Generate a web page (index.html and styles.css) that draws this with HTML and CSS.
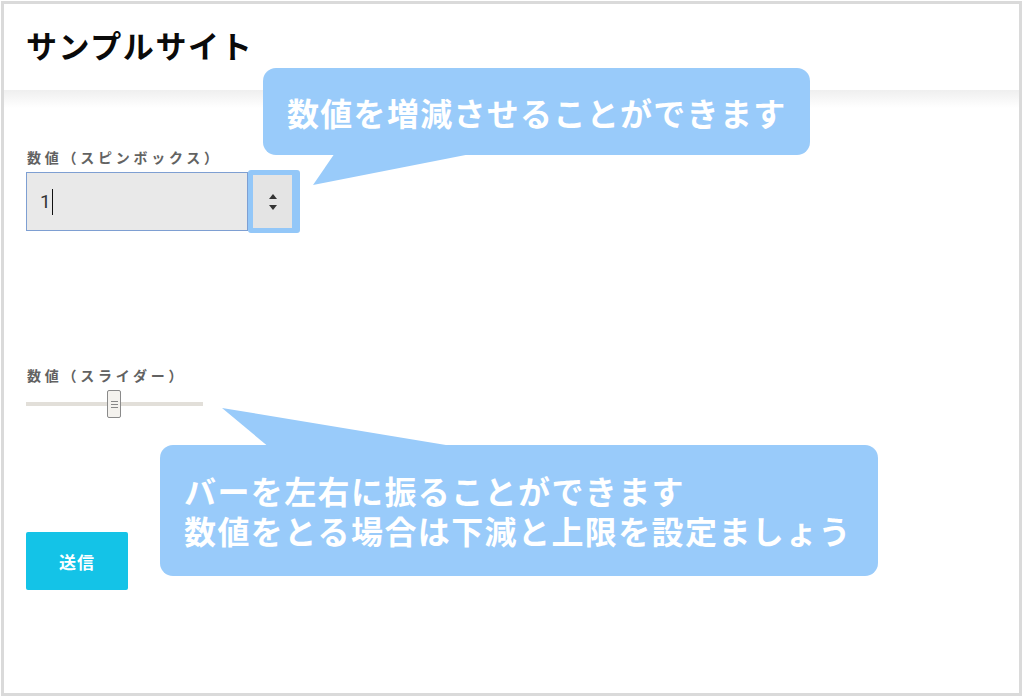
FILE: index.html
```html
<!DOCTYPE html>
<html lang="ja">
<head>
  <meta charset="UTF-8">
  <meta name="viewport" content="width=device-width, initial-scale=1.0">
  <title>サンプルサイト</title>
  <link rel="stylesheet" href="styles.css">
</head>
<body>
  <div class="frame">
    <header class="site-header">
      <h1 class="site-title">サンプルサイト</h1>
    </header>

    <main class="content">
      <div class="field">
        <div class="label">数値（スピンボックス）</div>
        <div class="spin-row">
          <div class="spin-input"><span class="value">1</span><span class="caret"></span></div>
          <div class="spin-buttons">
            <div class="spin-inner">
              <span class="arrow up"></span>
              <span class="arrow down"></span>
            </div>
          </div>
        </div>
      </div>

      <div class="field slider-field">
        <div class="label">数値（スライダー）</div>
        <div class="slider">
          <div class="thumb"><span></span><span></span><span></span></div>
        </div>
      </div>

      <button class="submit">送信</button>
    </main>

    <div class="callout callout-spin">数値を増減させることができます</div>
    <div class="callout callout-slider">
      <div class="line">バーを左右に振ることができます</div>
      <div class="line">数値をとる場合は下減と上限を設定ましょう</div>
    </div>
  </div>
</body>
</html>
```

FILE: styles.css
```css
body {
  margin: 0;
  background: #fff;
  font-family: "Noto Sans CJK JP", "Noto Sans", sans-serif;
}

.frame {
  position: relative;
  height: 689px;
  margin: 1px 2px 0 1px;
  border: 3px solid #dadada;
  background: #fff;
}

.site-header {
  height: 86px;
  padding: 0 22px;
  display: flex;
  align-items: center;
}

.site-title {
  margin: 0 0 6px 0;
  font-size: 31px;
  font-weight: 700;
  color: #0a0a0a;
  letter-spacing: 1.6px;
}

.content {
  padding: 57px 22px 0;
  height: 520px;
  background: linear-gradient(#efefef, #fff 18px);
}

.label {
  font-size: 14px;
  line-height: 21px;
  font-weight: 700;
  color: #626262;
  letter-spacing: 3.75px;
  padding-left: 1px;
}

.spin-row {
  display: flex;
  align-items: center;
  margin-top: 2px;
}

.spin-input {
  width: 207px;
  height: 57px;
  padding-left: 13px;
  background: #e9e9e9;
  border: 1px solid #7e9fd2;
  display: flex;
  align-items: center;
  font-family: "Roboto", "Noto Sans", sans-serif;
  font-size: 19px;
  color: #333;
}

.caret {
  width: 1px;
  height: 26px;
  margin-left: 1px;
  background: #111;
}

.spin-buttons {
  width: 42px;
  height: 53px;
  border: 5px solid #93c7f8;
  border-radius: 3px;
  background: #93c7f8;
}

.spin-inner {
  height: 100%;
  margin-right: 3px;
  background: #e4e4e4;
  display: flex;
  flex-direction: column;
  align-items: center;
  justify-content: center;
  gap: 6px;
}

.arrow {
  width: 0;
  height: 0;
  border-left: 4px solid transparent;
  border-right: 4px solid transparent;
}

.arrow.up {
  border-bottom: 5px solid #333;
}

.arrow.down {
  border-top: 5px solid #333;
}

.slider-field {
  margin-top: 132px;
}

.slider {
  width: 177px;
  height: 28px;
  margin-top: 4px;
  padding-left: 81px;
  box-sizing: border-box;
  display: flex;
  align-items: center;
  background: linear-gradient(#e2dfd9, #e2dfd9) center / 100% 4px no-repeat;
}

.thumb {
  width: 12px;
  height: 26px;
  border: 1px solid #8a8a8a;
  border-radius: 2px;
  background: #f4f2ee;
  display: flex;
  flex-direction: column;
  align-items: center;
  justify-content: center;
  gap: 2px;
}

.thumb span {
  width: 7px;
  height: 1px;
  background: #888;
}

.submit {
  display: block;
  margin-top: 114px;
  width: 102px;
  height: 58px;
  border: none;
  border-radius: 2px;
  background: #14c3e7;
  color: #fff;
  font-family: "Noto Sans CJK JP", sans-serif;
  font-size: 17px;
  font-weight: 700;
  letter-spacing: 1px;
}

.callout {
  position: absolute;
  background: #99cbfa;
  color: #fff;
  font-weight: 700;
  font-size: 32px;
  border-radius: 13px;
  box-sizing: border-box;
  white-space: nowrap;
}

.callout::after {
  content: "";
  position: absolute;
  background: #99cbfa;
}

.callout-spin {
  left: 259px;
  top: 64px;
  width: 547px;
  height: 87px;
  padding: 0 20px 0 24px;
  display: flex;
  align-items: center;
  line-height: 1;
  letter-spacing: 1.3px;
}

.callout-spin::after {
  left: 0;
  top: 82px;
  width: 230px;
  height: 36px;
  clip-path: polygon(74px 0, 228px 0, 50px 35px);
}

.callout-slider {
  left: 156px;
  top: 441px;
  width: 718px;
  height: 131px;
  padding: 29px 24px 0;
  display: flex;
  flex-direction: column;
  gap: 8px;
}

.callout-slider .line {
  line-height: 32px;
  letter-spacing: 1.4px;
}

.callout-slider::after {
  left: 0;
  top: -37px;
  width: 310px;
  height: 40px;
  clip-path: polygon(62px 0, 304px 40px, 110px 40px);
}
```
